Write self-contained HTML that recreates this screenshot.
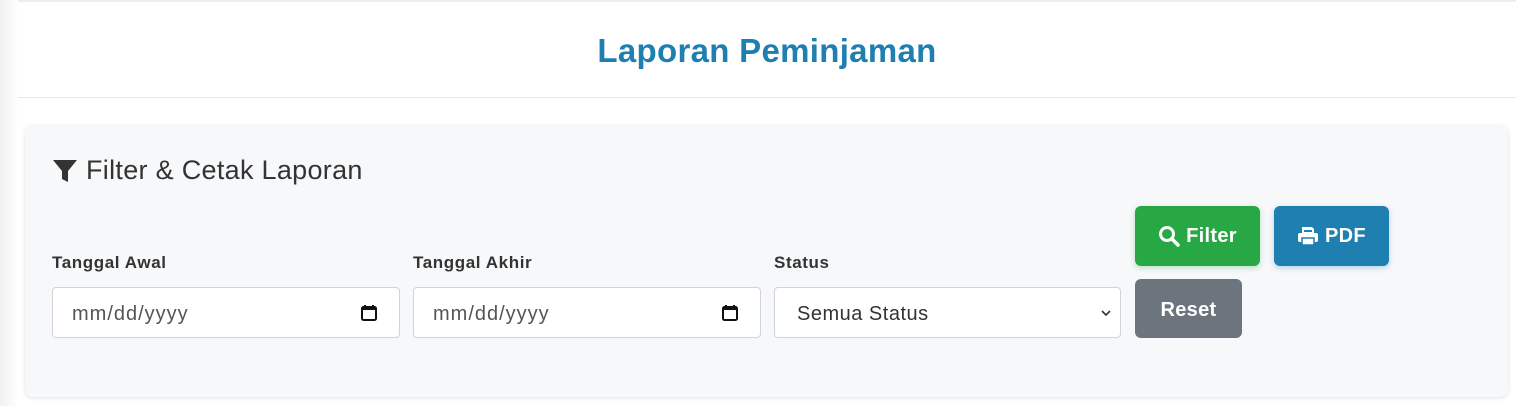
<!DOCTYPE html>
<html><head><style>
body{margin:0;width:1516px;height:406px;background:#fff;font-family:"Liberation Sans",sans-serif;position:relative;overflow:hidden}
.top{position:absolute;left:0;top:0;width:1516px;height:2px;background:#eee}
.lshadow{position:absolute;left:0;top:0;width:18px;height:406px;background:linear-gradient(90deg,#f0f0f0,#fff)}
.hdr{position:absolute;left:18px;top:2px;width:1498px;height:95px;border-bottom:1px solid #e6e6e6;text-align:center;background:#fff}
.hdr h1{margin:0;line-height:98px;font-size:33px;letter-spacing:0.3px;color:#1f7fb0;font-weight:bold}
.card{position:absolute;left:25px;top:125px;width:1483px;height:272px;background:#f7f8fa;border-radius:8px;box-shadow:0 1px 4px rgba(0,0,0,.12)}
.h2{position:absolute;left:52px;top:155px;font-size:27px;letter-spacing:0.3px;color:#333;display:flex;align-items:center;gap:8px}
.lbl{position:absolute;top:253px;font-size:17px;letter-spacing:0.6px;font-weight:bold;color:#333}
.inp{position:absolute;top:287px;width:346px;height:49px;border:1px solid #ced4da;border-radius:4px;background:#fff;font-size:20px;letter-spacing:1px;color:#555;box-sizing:content-box}
.inp span{position:absolute;left:19px;top:15px}
.btn{position:absolute;color:#fff;font-weight:bold;font-size:20px;letter-spacing:0.3px;border-radius:6px;display:flex;align-items:center;justify-content:center;gap:6px}
</style></head><body>
<div class="top"></div><div class="lshadow"></div>
<div class="hdr"><h1>Laporan Peminjaman</h1></div>
<div class="card"></div>
<div class="h2"><svg width="26" height="26" viewBox="0 0 26 26"><path d="M1 2h24l-9 11v11l-6-3v-8z" fill="#333"/></svg>Filter &amp; Cetak Laporan</div>
<div class="lbl" style="left:52px">Tanggal Awal</div>
<div class="lbl" style="left:413px">Tanggal Akhir</div>
<div class="lbl" style="left:774px">Status</div>
<div class="inp" style="left:52px"><span>mm/dd/yyyy</span><svg style="position:absolute;left:307px;top:16px" width="18" height="18" viewBox="0 0 18 18"><rect x="2" y="3" width="14" height="13" rx="1.5" fill="none" stroke="#111" stroke-width="2"/><rect x="2" y="3" width="14" height="3" fill="#111"/><path d="M5 1v3M13 1v3" stroke="#111" stroke-width="2"/></svg></div>
<div class="inp" style="left:413px"><span>mm/dd/yyyy</span><svg style="position:absolute;left:307px;top:16px" width="18" height="18" viewBox="0 0 18 18"><rect x="2" y="3" width="14" height="13" rx="1.5" fill="none" stroke="#111" stroke-width="2"/><rect x="2" y="3" width="14" height="3" fill="#111"/><path d="M5 1v3M13 1v3" stroke="#111" stroke-width="2"/></svg></div>
<div class="inp" style="left:774px;width:345px"><span style="left:22px;color:#333;letter-spacing:0.5px">Semua Status</span><svg style="position:absolute;left:325px;top:21px" width="12" height="8" viewBox="0 0 12 8"><path d="M2 2l4 4 4-4" fill="none" stroke="#333" stroke-width="1.6"/></svg></div>
<div class="btn" style="left:1135px;top:206px;width:125px;height:60px;background:#28a745;box-shadow:0 2px 6px rgba(40,167,69,.3)"><svg width="22" height="22" viewBox="0 0 22 22"><circle cx="9" cy="9" r="6.5" fill="none" stroke="#fff" stroke-width="3"/><path d="M14 14l6 6" stroke="#fff" stroke-width="3.5" stroke-linecap="round"/></svg>Filter</div>
<div class="btn" style="left:1274px;top:206px;width:115px;height:60px;background:#1f7fb0;box-shadow:0 2px 6px rgba(31,127,176,.3)"><svg width="22" height="22" viewBox="0 0 22 22"><path d="M5 2h10l2 2v4H5z" fill="#fff"/><rect x="1" y="8" width="20" height="9" rx="2" fill="#fff"/><rect x="5" y="13" width="12" height="7" fill="#fff" stroke="#1f7fb0" stroke-width="1.5"/><rect x="7" y="5" width="8" height="2" fill="#1f7fb0"/></svg>PDF</div>
<div class="btn" style="left:1135px;top:279px;width:107px;height:59px;background:#6c757d;padding-top:4px;box-sizing:border-box">Reset</div>
</body></html>
